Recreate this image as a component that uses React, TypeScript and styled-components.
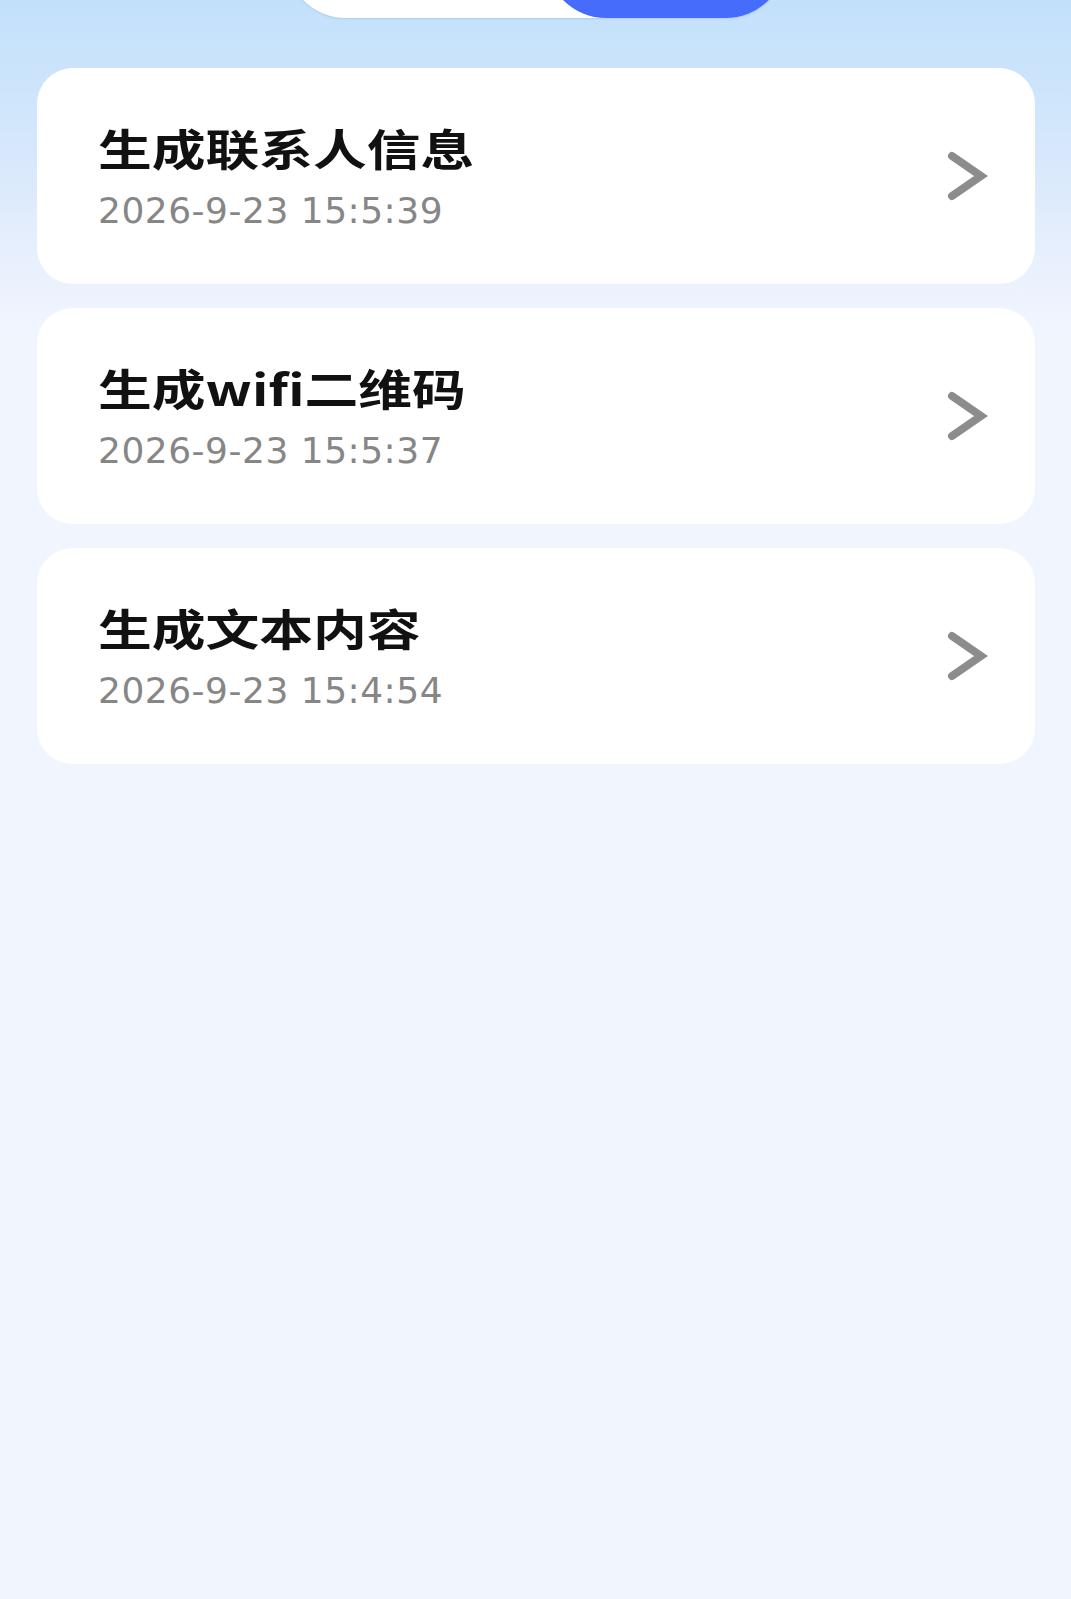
import styled, { createGlobalStyle } from 'styled-components';

const GlobalStyle = createGlobalStyle`
  html, body {
    margin: 0;
    padding: 0;
  }
  body {
    font-family: "Noto Sans CJK SC", "Noto Sans", sans-serif;
    background: #f1f5fe;
  }
`;

const Page = styled.div`
  min-height: 1599px;
  overflow: hidden;
  background: linear-gradient(
    180deg,
    #c3e0fb 0px,
    #cde5fb 90px,
    #dbe9fc 180px,
    #e8f0fd 260px,
    #f1f5fe 330px,
    #f1f5fe 100%
  );
`;

const TabBar = styled.div`
  display: flex;
  justify-content: flex-end;
  width: 500px;
  height: 120px;
  margin: -102px 0 0 286px;
  background: #ffffff;
  border-radius: 60px;
  box-shadow: 0 1px 2px rgba(120, 150, 190, 0.25);
`;

const ActiveTab = styled.div`
  width: 240px;
  height: 100%;
  background: #466cfb;
  border-radius: 60px;
`;

const List = styled.div`
  display: flex;
  flex-direction: column;
  gap: 24px;
  padding: 50px 36px 0 37px;
`;

const Card = styled.div`
  display: flex;
  align-items: center;
  justify-content: space-between;
  height: 216px;
  padding: 0 47px 0 61px;
  box-sizing: border-box;
  background: #ffffff;
  border-radius: 36px;
`;

const Texts = styled.div`
  display: flex;
  flex-direction: column;
  gap: 19px;
`;

const Title = styled.div`
  font-family: "Noto Sans CJK SC", "Noto Sans", sans-serif;
  font-weight: 700;
  font-size: 43px;
  line-height: 50px;
  color: #111111;
  white-space: nowrap;
  transform: scaleX(1.25);
  transform-origin: left center;
`;

const Time = styled.div`
  font-family: "DejaVu Sans", "Noto Sans", sans-serif;
  font-size: 36px;
  line-height: 40px;
  letter-spacing: 0.5px;
  color: #868686;
`;

const Chevron = () => (
  <svg width="44" height="56" viewBox="0 0 44 56" fill="none">
    <polyline
      points="8,8 37,28 8,48"
      stroke="#8c8c8c"
      strokeWidth="8"
      strokeLinecap="round"
      strokeLinejoin="miter"
    />
  </svg>
);

const records = [
  { title: '生成联系人信息', time: '2026-9-23 15:5:39' },
  { title: '生成wifi二维码', time: '2026-9-23 15:5:37' },
  { title: '生成文本内容', time: '2026-9-23 15:4:54' },
];

export default function App() {
  return (
    <Page>
      <GlobalStyle />
      <TabBar>
        <ActiveTab />
      </TabBar>
      <List>
        {records.map((r) => (
          <Card key={r.time}>
            <Texts>
              <Title>{r.title}</Title>
              <Time>{r.time}</Time>
            </Texts>
            <Chevron />
          </Card>
        ))}
      </List>
    </Page>
  );
}
